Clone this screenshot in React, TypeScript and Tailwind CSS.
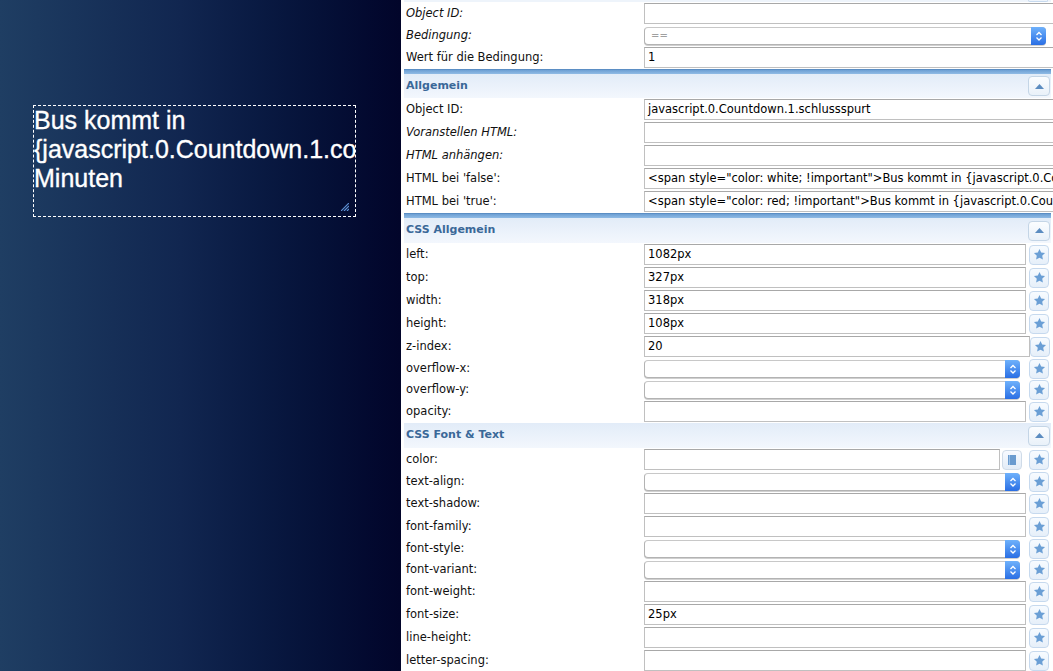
import React from "react";

const Star = () => (
  <div className="ml-auto mr-[2px] flex h-[20px] w-[20px] shrink-0 items-center justify-center rounded-[4px] border border-[#c6d9ee] bg-linear-to-b from-[#f7fbff] to-[#e6eff9]">
    <svg width="13" height="13" viewBox="0 0 24 24">
      <path
        d="M12 1.8l3.1 6.5 7.1.9-5.2 4.9 1.3 7.1L12 17.8l-6.3 3.4L7 14.1 1.8 9.2l7.1-.9z"
        fill="#6b9fd5"
      />
    </svg>
  </div>
);

const Collapse = () => (
  <div className="mr-[1px] flex h-[20px] w-[22px] items-center justify-center rounded-[4px] border border-[#c4d5e6] bg-linear-to-b from-[#fbfdff] to-[#e9f1f9]">
    <svg width="9" height="5" viewBox="0 0 9 5">
      <path d="M0 5L4.5 0L9 5z" fill="#5b8cc0" />
    </svg>
  </div>
);

const Input = ({ value = "", w }: { value?: string; w: string }) => (
  <div
    className={`h-[21px] shrink-0 overflow-hidden whitespace-nowrap border border-[#c0c0c0] border-t-[#a8a8a8] bg-white px-[3px] text-[11.5px] leading-[19px] text-black ${w}`}
  >
    {value}
  </div>
);

const Select = ({ value = "", w }: { value?: string; w: string }) => (
  <div
    className={`flex h-[18px] shrink-0 rounded-[4px] border border-[#b3b3b3] border-t-[#c8c8c8] bg-white shadow-[0_1px_0_#d0d0d0] ${w}`}
  >
    <div className="flex-1 px-[6px] text-[10px] leading-[16px] text-[#a0a0a0]">{value}</div>
    <div className="-my-px -mr-px flex w-[15px] items-center justify-center rounded-r-[4px] bg-linear-to-b from-[#6fb1fb] to-[#2a6ee4]">
      <svg width="8" height="12" viewBox="0 0 8 12">
        <path d="M1.5 5L4 2.5L6.5 5M1.5 7.5L4 10L6.5 7.5" stroke="#fff" strokeWidth="1.3" fill="none" />
      </svg>
    </div>
  </div>
);

const Label = ({ text, italic }: { text: string; italic?: boolean }) => (
  <div
    className={`w-[240px] shrink-0 whitespace-nowrap pl-[2px] text-[11.5px] text-[#111] ${italic ? "italic" : ""}`}
  >
    {text}
  </div>
);

const Row = ({ children, sel }: { children: React.ReactNode; sel?: boolean }) => (
  <div className={`flex items-center ${sel ? "h-[21px]" : "h-[23px]"}`}>{children}</div>
);

const Bar = () => <div className="h-[5px] border-t border-[#5b8ec4] bg-linear-to-b from-[#6c9fd3] to-[#90bbe5]" />;

const Header = ({ title, h }: { title: string; h: string }) => (
  <div
    className={`flex items-center justify-between bg-linear-to-b from-[#e2ecf8] to-[#f3f7fd] pl-[2px] text-[11px] font-bold text-[#3a6898] ${h}`}
  >
    <span>{title}</span>
    <Collapse />
  </div>
);

const CssInputRow = ({ label, value, w = "w-[382px]" }: { label: string; value?: string; w?: string }) => (
  <Row>
    <Label text={label} />
    <Input value={value} w={w} />
    <Star />
  </Row>
);

const CssSelectRow = ({ label }: { label: string }) => (
  <Row sel>
    <Label text={label} />
    <Select w="w-[376px]" />
    <Star />
  </Row>
);

export default function App() {
  return (
    <div className="flex h-[671px] w-[1053px] overflow-hidden font-['DejaVu_Sans',sans-serif]">
      {/* canvas */}
      <div className="relative h-full w-[401px] shrink-0 bg-linear-to-r from-[#1f3e63] via-[#112650] via-45% to-[#02052a]">
        <div className="absolute left-[33px] top-[105px] h-[112px] w-[323px] overflow-hidden border border-dashed border-white font-['Liberation_Sans',Arial,sans-serif] text-[25px] leading-[normal] text-white [-webkit-text-stroke:0.35px_white]">
          Bus kommt in {"{javascript.0.Countdown.1.countdown}"} Minuten
          <svg className="absolute bottom-[5px] right-[6px]" width="8" height="8" viewBox="0 0 8 8">
            <path d="M8 0L0 8M8 3L3 8M8 6L6 8" stroke="#5c90d4" strokeWidth="1.2" />
          </svg>
        </div>
      </div>

      {/* properties panel */}
      <div className="h-full flex-1 overflow-hidden bg-white pl-[3px] pr-[2px]">
        <div className="flex h-[2px] justify-end bg-[#eef4fb] pr-[3px]">
          <div className="h-[2px] w-[20px] rounded-b-[3px] border-x border-b border-[#c6d9ee]" />
        </div>

        <Row>
          <Label text="Object ID:" italic />
          <Input w="w-[420px]" />
        </Row>
        <Row sel>
          <Label text="Bedingung:" italic />
          <Select value="==" w="w-[402px]" />
        </Row>
        <Row>
          <Label text="Wert für die Bedingung:" />
          <Input value="1" w="w-[420px]" />
        </Row>

        <Bar />
        <Header title="Allgemein" h="h-[24px]" />
        <Row>
          <Label text="Object ID:" />
          <Input value="javascript.0.Countdown.1.schlussspurt" w="w-[420px]" />
        </Row>
        <Row>
          <Label text="Voranstellen HTML:" italic />
          <Input w="w-[420px]" />
        </Row>
        <Row>
          <Label text="HTML anhängen:" italic />
          <Input w="w-[420px]" />
        </Row>
        <Row>
          <Label text="HTML bei 'false':" />
          <Input
            value={'<span style="color: white; !important">Bus kommt in {javascript.0.Countdown.1.countdown} Minuten</span>'}
            w="w-[420px]"
          />
        </Row>
        <Row>
          <Label text="HTML bei 'true':" />
          <Input
            value={'<span style="color: red; !important">Bus kommt in {javascript.0.Countdown.1.countdown} Minuten</span>'}
            w="w-[420px]"
          />
        </Row>

        <Bar />
        <Header title="CSS Allgemein" h="h-[25px]" />
        <CssInputRow label="left:" value="1082px" />
        <CssInputRow label="top:" value="327px" />
        <CssInputRow label="width:" value="318px" />
        <CssInputRow label="height:" value="108px" />
        <CssInputRow label="z-index:" value="20" w="w-[386px]" />
        <CssSelectRow label="overflow-x:" />
        <CssSelectRow label="overflow-y:" />
        <CssInputRow label="opacity:" />

        <Header title="CSS Font & Text" h="h-[25px]" />
        <Row>
          <Label text="color:" />
          <Input w="w-[356px]" />
          <div className="ml-[2px] flex h-[20px] w-[20px] items-center justify-center rounded-[4px] border border-[#cfdbe8] bg-linear-to-b from-[#f7faff] to-[#e3ecf6]">
            <svg width="8" height="10" viewBox="0 0 8 10">
              <rect x="0" y="0" width="8" height="10" fill="#6a9bcf" />
              <rect x="1" y="0" width="1" height="10" fill="#9cc0e6" />
            </svg>
          </div>
          <Star />
        </Row>
        <CssSelectRow label="text-align:" />
        <CssInputRow label="text-shadow:" />
        <CssInputRow label="font-family:" />
        <CssSelectRow label="font-style:" />
        <CssSelectRow label="font-variant:" />
        <CssInputRow label="font-weight:" />
        <CssInputRow label="font-size:" value="25px" />
        <CssInputRow label="line-height:" />
        <CssInputRow label="letter-spacing:" />
      </div>
    </div>
  );
}
